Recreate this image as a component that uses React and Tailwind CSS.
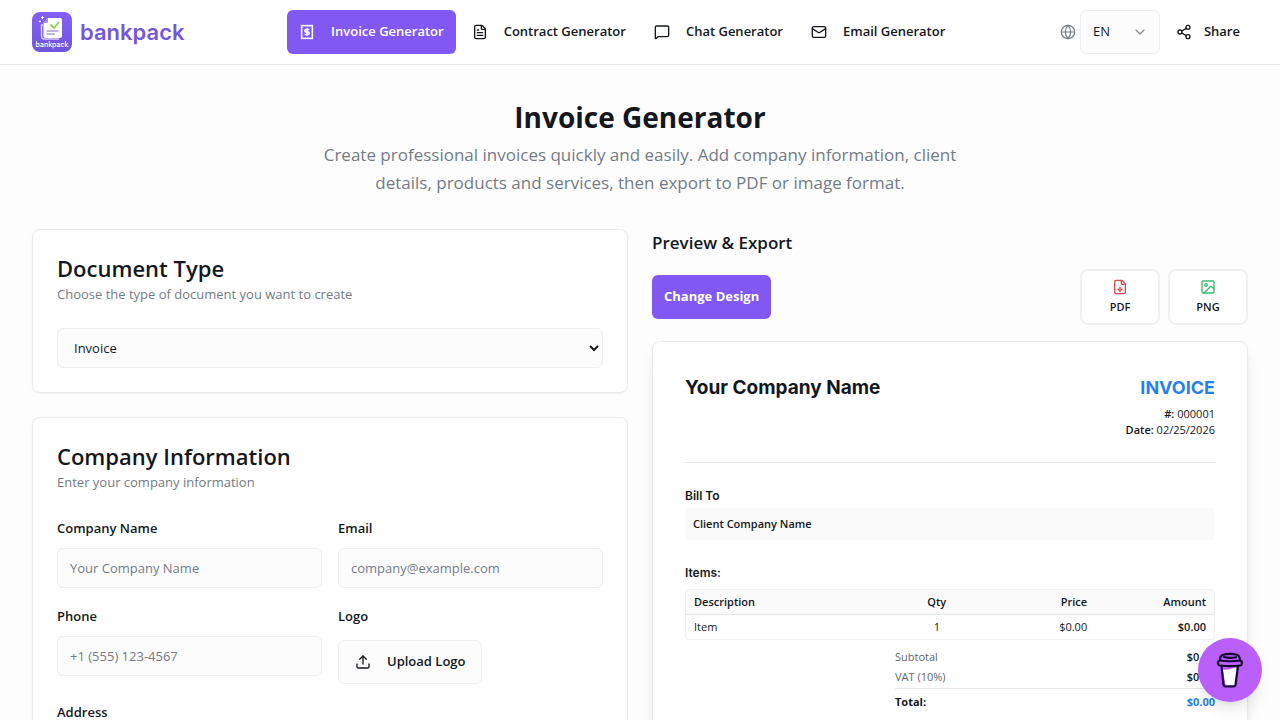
import { useState } from "react";
import {
  ChevronDown,
  FileDown,
  FileText,
  Globe,
  Image,
  Mail,
  MessageSquare,
  Share2,
  Upload,
} from "lucide-react";

// Receipt with perforated edges, used by the first nav entry
function InvoiceIcon({ className }) {
  return (
    <svg className={className} viewBox="0 0 16 16" fill="none" stroke="currentColor">
      <path d="M2.6 1.6h10.8v12.8H2.6z" strokeWidth="1.2" />
      <path d="M2.6 1v14M13.4 1v14M2 1.6h12M2 14.4h12" strokeWidth="1.6" strokeDasharray="1.2 0.9" />
      <path d="M10.3 5.6H7a1.2 1.2 0 0 0 0 2.4h2a1.2 1.2 0 0 1 0 2.4H5.7M8 4.2v7.6" strokeWidth="1.5" />
    </svg>
  );
}

function BrandMark() {
  return (
    <svg className="size-10 shrink-0" viewBox="0 0 40 40" aria-hidden="true">
      <defs>
        <linearGradient id="brand" x1="0" y1="0" x2="0" y2="1">
          <stop offset="0" stopColor="#8560f5" />
          <stop offset="1" stopColor="#6f55d9" />
        </linearGradient>
      </defs>
      <rect width="40" height="40" rx="8" fill="url(#brand)" />
      <path d="M11 13H9.5v11a3 3 0 0 0 3 3H27" fill="none" stroke="#d9d0fb" strokeWidth="1.4" />
      <path d="M16 6h12.500a1.5 1.5 0 0 1 1.500 1.500V24a2 2 0 0 1-2 2H13.500a2 2 0 0 1-2-2V11z" fill="#fff" />
      <path d="M16 6v3.500a1.5 1.5 0 0 1-1.500 1.500h-3z" fill="#a48df5" />
      <path d="m18.500 12.500 3.500 3.500 5-6" fill="none" stroke="#8bcf4d" strokeWidth="1.8" />
      <path d="M14.500 19h12M14.500 22h8.500" stroke="#7c6cc4" strokeWidth="1.2" />
      <path d="M10.500 4v3M9 5.500h3M8 8.500v2M7 9.500h2" stroke="#fff" strokeWidth="0.9" />
      <text x="20" y="35" textAnchor="middle" fill="#fff" fontSize="7" fontWeight="500" fontFamily="Inter, sans-serif">
        bankpack
      </text>
    </svg>
  );
}

function CoffeeIcon() {
  return (
    <svg
      className="h-9 w-7"
      viewBox="0 0 28 36"
      fill="none"
      stroke="#160a33"
      strokeWidth="2.2"
      strokeLinecap="round"
      strokeLinejoin="round"
      aria-hidden="true"
    >
      <path d="M6.800 17.500q5 1 8.500-.8 3-1.500 5.500-.7L19 32.500q-5 1.200-9.500 0z" fill="#fff" stroke="none" />
      <path d="M5.500 14 7.500 33q.3 1.500 2 1.500h8q1.700 0 2-1.500l2.500-19" />
      <path d="M3.500 8.500q-1.800.8-1.500 3 .3 1.900 2 2 10 1.200 20 0 1.700-.2 2-2.200.1-2-1.500-2.800" />
      <path d="M3.500 8.500q10.500 1.500 21 0M4.200 8.300q-.5-4.300 2.300-5.300 7-2.200 14.500-.2 2.500.8 3 5.200M8 5q6 1.600 12 .2" />
    </svg>
  );
}

const navItems = [
  { label: "Invoice Generator", icon: InvoiceIcon },
  { label: "Contract Generator", icon: FileText },
  { label: "Chat Generator", icon: MessageSquare },
  { label: "Email Generator", icon: Mail },
];

const fieldClass =
  "block h-10 w-full rounded-md border border-[#eceef0] bg-[#fcfcfd] px-3 text-[13px] text-[#14181d] placeholder:text-[#737b85] outline-none";

function Card({ title, subtitle, children }) {
  return (
    <section className="rounded-lg border border-[#e9eaec] bg-white p-6 shadow-xs">
      <h2 className="text-[22px] leading-7 font-semibold">{title}</h2>
      <p className="mt-0.5 text-[13px] leading-5 text-[#737b85]">{subtitle}</p>
      <div className="mt-6">{children}</div>
    </section>
  );
}

function Field({ id, label, type = "text", placeholder }) {
  return (
    <div>
      <label htmlFor={id} className="mb-2 block text-[13px] leading-6 font-semibold">{label}</label>
      <input id={id} type={type} placeholder={placeholder} className={fieldClass} />
    </div>
  );
}

function Header({ active, setActive }) {
  return (
    <header className="border-b border-[#e6e7e9] bg-white">
      <div className="flex h-16 items-center justify-between px-8">
        <a href="#" className="flex items-center gap-2">
          <BrandMark />
          <span className="font-[Inter,sans-serif] text-[22px] leading-7 font-semibold text-[#7558d6]">bankpack</span>
        </a>

        <nav className="flex gap-1">
          {navItems.map(({ label, icon: Icon }) => (
            <button
              key={label}
              onClick={() => setActive(label)}
              className={`flex h-11 items-center gap-4 rounded-md px-3 text-[13px] font-semibold ${
                active === label ? "bg-[#8159f2] text-white" : ""
              }`}
            >
              <Icon className="size-4" />
              {label}
            </button>
          ))}
        </nav>

        <div className="flex items-center gap-1">
          <Globe className="size-4 text-[#737b85]" strokeWidth={1.8} />
          <div className="relative">
            <select
              aria-label="Language"
              defaultValue="EN"
              className="block h-11 w-20 appearance-none rounded-md border border-[#eceef0] bg-[#fcfcfd] px-3 text-[13px] outline-none"
            >
              <option>EN</option>
              <option>RU</option>
            </select>
            <ChevronDown className="pointer-events-none absolute top-3.5 right-3 size-4 text-[#858a91]" />
          </div>
          <button className="ml-1 flex h-11 items-center gap-3 rounded-md px-2 text-[13px] font-semibold">
            <Share2 className="size-4" />
            Share
          </button>
        </div>
      </div>
    </header>
  );
}

function ExportButton({ icon: Icon, label, color }) {
  return (
    <button className="flex h-14 w-20 flex-col items-center justify-center gap-1 rounded-lg border-2 border-[#eff0f1] bg-white text-[11px] leading-4 font-semibold">
      <Icon className={`size-4 ${color}`} />
      {label}
    </button>
  );
}

function InvoicePreview() {
  return (
    <article className="mt-4 rounded-lg border border-[#e9eaec] bg-white p-8 text-[11px] shadow-lg">
      <div className="flex justify-between border-b border-[#e6e7e9] pb-6">
        <h3 className="font-[Inter,sans-serif] text-[19px] leading-7 font-bold">Your Company Name</h3>
        <div className="text-right leading-4">
          <div className="mb-1 font-[Inter,sans-serif] text-lg leading-7 font-bold text-[#2a7fee]">INVOICE</div>
          <p><span className="font-semibold">#:</span> 000001</p>
          <p><span className="font-semibold">Date:</span> 02/25/2026</p>
        </div>
      </div>

      <h4 className="mt-6 mb-1 font-[Inter,sans-serif] text-xs leading-[17px] font-semibold">Bill To</h4>
      <div className="bg-[#fafafb] p-2 leading-4 font-semibold">Client Company Name</div>

      <h4 className="mt-6 mb-2 font-[Inter,sans-serif] text-xs leading-[17px] font-semibold">Items:</h4>
      <div className="overflow-hidden rounded border border-[#eff0f1]">
        <table className="w-full table-fixed leading-4">
          <colgroup>
            <col className="w-[40%]" />
            <col className="w-[15%]" />
            <col />
            <col />
          </colgroup>
          <thead>
            <tr className="border-b border-[#e6e7e9] bg-[#fafafb]">
              <th className="px-2 py-1 text-left font-semibold">Description</th>
              <th className="px-2 py-1 text-center font-semibold">Qty</th>
              <th className="px-2 py-1 text-right font-semibold">Price</th>
              <th className="px-2 py-1 text-right font-semibold">Amount</th>
            </tr>
          </thead>
          <tbody>
            <tr>
              <td className="px-2 py-1">Item</td>
              <td className="px-2 py-1 text-center">1</td>
              <td className="px-2 py-1 text-right">$0.00</td>
              <td className="px-2 py-1 text-right font-semibold">$0.00</td>
            </tr>
          </tbody>
        </table>
      </div>

      <dl className="mt-2 ml-auto w-80 leading-[17px]">
        <div className="mb-[3px] flex justify-between">
          <dt className="text-[#5f666e]">Subtotal</dt>
          <dd className="font-semibold">$0.00</dd>
        </div>
        <div className="mb-[3px] flex justify-between">
          <dt className="text-[#5f666e]">VAT (10%)</dt>
          <dd className="font-semibold">$0.00</dd>
        </div>
        <div className="flex justify-between border-t border-[#e6e7e9] pt-1 font-bold">
          <dt>Total:</dt>
          <dd className="text-[#2a7fee]">$0.00</dd>
        </div>
      </dl>
    </article>
  );
}

export default function App() {
  const [active, setActive] = useState("Invoice Generator");

  return (
    <div className="h-screen overflow-hidden bg-[#fdfdfd] font-['Open_Sans',sans-serif] text-[#14181d]">
      <Header active={active} setActive={setActive} />

      <main className="p-8">
        <div className="mx-auto mb-8 max-w-2xl text-center">
          <h1 className="mb-1 text-[28px] leading-10 font-bold">Invoice Generator</h1>
          <p className="mx-auto max-w-[640px] text-[17px] leading-7 text-[#737b85]">
            Create professional invoices quickly and easily. Add company information, client
            details, products and services, then export to PDF or image format.
          </p>
        </div>

        <div className="grid grid-cols-2 items-start gap-6">
          <div className="space-y-6">
            <Card title="Document Type" subtitle="Choose the type of document you want to create">
              <select aria-label="Document Type" defaultValue="Invoice" className={fieldClass}>
                <option>Invoice</option>
                <option>Receipt</option>
              </select>
            </Card>

            <Card title="Company Information" subtitle="Enter your company information">
              <div className="grid grid-cols-2 gap-4">
                <Field id="company" label="Company Name" placeholder="Your Company Name" />
                <Field id="email" label="Email" type="email" placeholder="company@example.com" />
                <Field id="phone" label="Phone" type="tel" placeholder="+1 (555) 123-4567" />
                <div>
                  <div className="mb-3 text-[13px] leading-6 font-semibold">Logo</div>
                  <button className="flex h-11 items-center gap-4 rounded-md border border-[#eceef0] bg-[#fcfcfd] px-4 text-[13px] font-semibold">
                    <Upload className="size-4" />
                    Upload Logo
                  </button>
                </div>
                <div className="col-span-2">
                  <Field id="address" label="Address" placeholder="Company address" />
                </div>
              </div>
            </Card>
          </div>

          <div>
            <h2 className="text-[17px] leading-7 font-semibold">Preview &amp; Export</h2>
            <div className="mt-3 flex items-center justify-between">
              <button className="h-11 rounded-md bg-[#8159f2] px-3 text-[13px] font-bold text-white">Change Design</button>
              <div className="flex gap-2">
                <ExportButton icon={FileDown} label="PDF" color="text-[#e0484a]" />
                <ExportButton icon={Image} label="PNG" color="text-[#3dbb6c]" />
              </div>
            </div>
            <InvoicePreview />
          </div>
        </div>
      </main>

      <button
        aria-label="Buy me a coffee"
        className="fixed right-[18px] bottom-[18px] flex size-16 items-center justify-center rounded-full bg-[#bb5ffb] shadow-lg"
      >
        <CoffeeIcon />
      </button>
    </div>
  );
}
